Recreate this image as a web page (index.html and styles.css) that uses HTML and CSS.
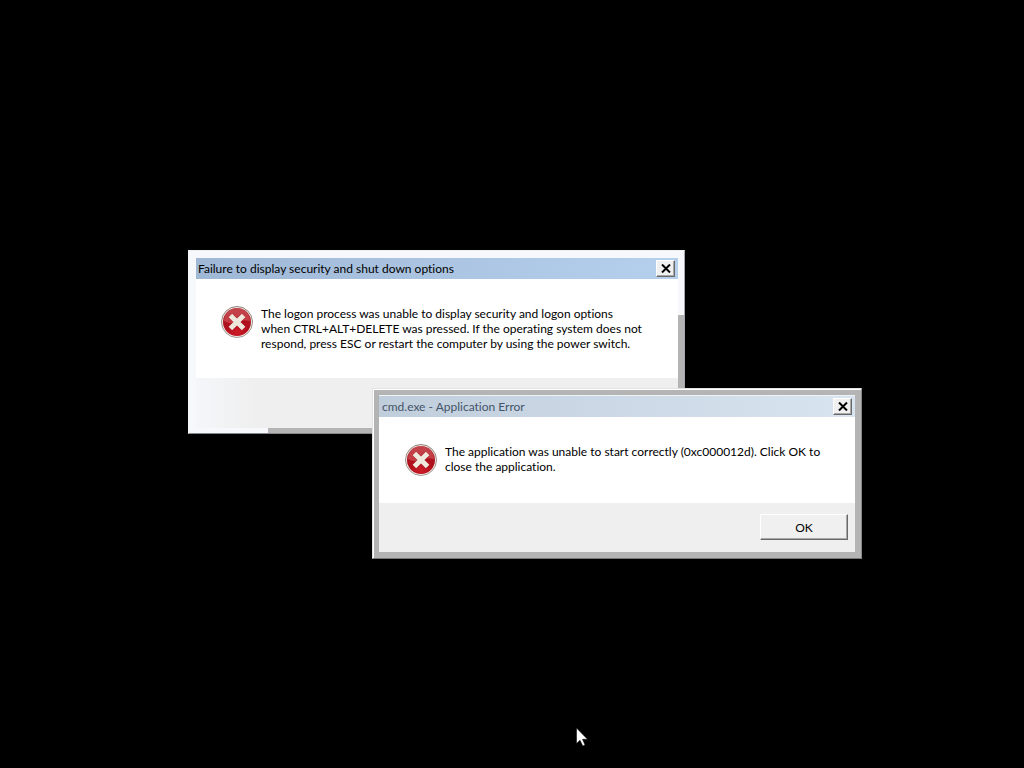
FILE: index.html
```
<!DOCTYPE html>
<html lang="en">
<head>
<meta charset="utf-8">
<title>Application Error</title>
<link rel="stylesheet" href="styles.css">
</head>
<body>
<svg class="defs" aria-hidden="true">
  <defs>
    <radialGradient id="red" cx="50%" cy="85%" r="85%">
      <stop offset="0" stop-color="#cc1c28"/>
      <stop offset="0.5" stop-color="#b00f1b"/>
      <stop offset="1" stop-color="#a8202a"/>
    </radialGradient>
    <linearGradient id="rim" x1="0" y1="0" x2="0" y2="1">
      <stop offset="0" stop-color="#8f8078"/>
      <stop offset="1" stop-color="#a59c96"/>
    </linearGradient>
    <symbol id="error" viewBox="0 0 32 32">
      <circle cx="16" cy="16" r="15.5" fill="#f3eeea" stroke="url(#rim)" stroke-width="1"/>
      <circle cx="16" cy="16" r="14" fill="url(#red)"/>
      <path d="M3 15A13 13 0 0 1 29 15Q22 13 16 16T3 15Z" fill="#e87b7d" opacity=".4"/>
      <path d="M9.5 9.5L22.5 22.5M22.5 9.5L9.5 22.5" stroke="#8e0c16" stroke-width="6" opacity=".5"/>
      <path d="M9.4 9.4L22.6 22.6M22.6 9.4L9.4 22.6" stroke="#efe8dd" stroke-width="5"/>
    </symbol>
    <symbol id="cross" viewBox="0 0 10 9">
      <path d="M1 .5L9 8.5M9 .5L1 8.5" stroke="#000" stroke-width="2" fill="none"/>
    </symbol>
  </defs>
</svg>
<main class="desktop">
  <section class="window logon" role="dialog" aria-labelledby="t1">
    <header class="titlebar">
      <h1 class="title" id="t1">Failure to display security and shut down options</h1>
      <button class="close" aria-label="Close"><svg class="cross"><use href="#cross"/></svg></button>
    </header>
    <div class="content">
      <svg class="icon" role="img" aria-label="Error"><use href="#error"/></svg>
      <p class="message">The logon process was unable to display security and logon options<br>when CTRL+ALT+DELETE was pressed. If the operating system does not<br>respond, press ESC or restart the computer by using the power switch.</p>
    </div>
    <footer class="actions"></footer>
  </section>
  <section class="window app" role="dialog" aria-labelledby="t2">
    <header class="titlebar">
      <h1 class="title" id="t2">cmd.exe - Application Error</h1>
      <button class="close" aria-label="Close"><svg class="cross"><use href="#cross"/></svg></button>
    </header>
    <div class="content">
      <svg class="icon" role="img" aria-label="Error"><use href="#error"/></svg>
      <p class="message">The application was unable to start correctly (0xc000012d). Click OK to<br>close the application.</p>
    </div>
    <footer class="actions"><button class="ok">OK</button></footer>
  </section>
  <svg class="cursor" viewBox="0 0 12 19" aria-hidden="true"><path d="M.5 0V15.5L4 12.2L6.8 18L9 17L6.5 11.3H11.5Z" fill="#fff" stroke="#000" stroke-width=".5"/></svg>
</main>
</body>
</html>
```
FILE: styles.css
```
* { box-sizing: border-box; }
body { margin: 0; background: #000; color: #000; font: 12px/15px Lato, "Open Sans", sans-serif; font-variant-ligatures: none; }
.defs { position: absolute; width: 0; height: 0; }
.desktop { position: relative; min-height: 100vh; overflow: hidden; }
.window { position: absolute; border: 1px solid; }
.logon {
  left: 188px; top: 250px; width: 497px; padding: 7px 6px 5px 7px;
  border-color: #eef0f4 #a4a8ae #85888b #f4f6fa;
  background:
    linear-gradient(#b4b4b4, #b4b4b4) 100% 100% / 6px 118px no-repeat,
    linear-gradient(#b4b4b4, #b4b4b4) 79px 100% / 100% 5px no-repeat,
    #f7f8fc;
}
.app {
  left: 372px; top: 388px; width: 490px; padding: 6px;
  border-color: #e3e3e3 #8a8a8a #777 #e3e3e3;
  background: #b4b4b4;
  box-shadow: inset 1px 1px #fff;
}
.titlebar { display: flex; align-items: center; justify-content: space-between; height: 21px; padding: 0 3px 0 2px; background: linear-gradient(90deg, #9fb8d6, #b5d0ec); }
.app .titlebar { height: 22px; border-top: 1px solid #eef3f7; padding-left: 3px; background: linear-gradient(90deg, #c0cddb, #d8e4f0); }
.title { margin: 0; font-size: 12px; line-height: 15px; font-weight: 400; }
.app .title { color: #44546a; }
.close, .ok { display: flex; align-items: center; justify-content: center; padding: 0; border: 1px solid; border-color: #fff #696969 #696969 #fff; background: #f0f0f0; box-shadow: inset -1px -1px #a8a8a8; color: #000; font: inherit; }
.close { width: 19px; height: 17px; }
.cross { width: 10px; height: 9px; }
.content { display: flex; gap: 8px; padding: 27px 25px; background: #fff; }
.app .content { min-height: 86px; padding-left: 26px; }
.logon .content { min-height: 98px; }
.icon { flex: none; width: 32px; height: 32px; }
.message { margin: 0; white-space: nowrap; }
.actions { display: flex; justify-content: flex-end; height: 50px; padding: 11px 7px; background: #efefef; }
.app .actions { height: 49px; }
.logon .actions { background: linear-gradient(90deg, #f4f6f9, #efefef 60px); }
.ok { width: 88px; height: 26px; }
.cursor { position: absolute; left: 576px; top: 728px; width: 12px; height: 19px; }
```
